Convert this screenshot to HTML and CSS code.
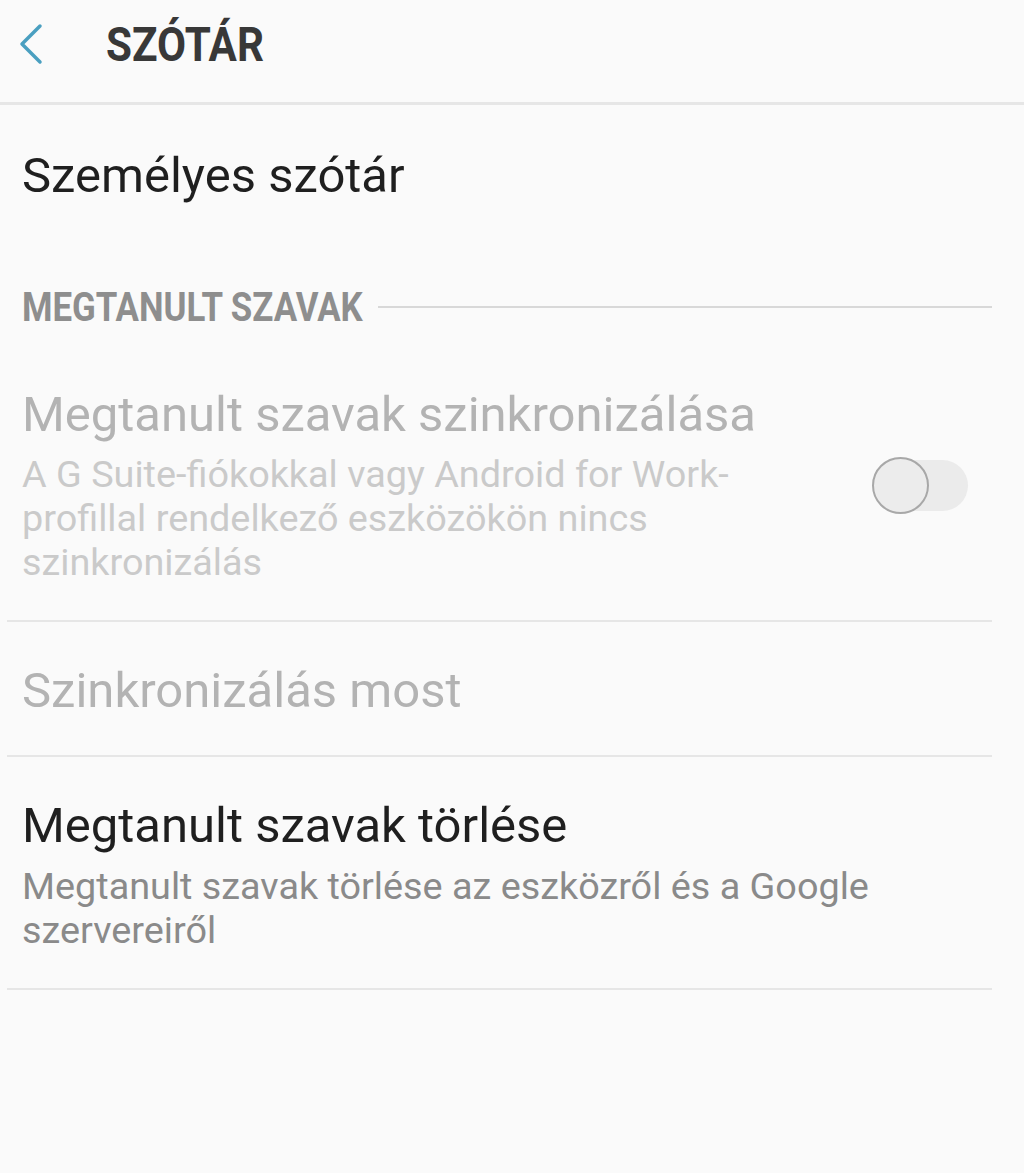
FILE: index.html
```html
<!DOCTYPE html>
<html lang="hu">
<head>
    <meta charset="UTF-8">
    <meta name="viewport" content="width=device-width, initial-scale=1.0">
    <title>Szótár</title>
    <link rel="stylesheet" href="styles.css">
</head>
<body>

    <header class="topbar">
        <svg class="back" width="30" height="44" viewBox="0 0 30 44">
            <polyline points="24,4 6,22 24,40" fill="none" stroke="#4a9fc0" stroke-width="3.5" stroke-linecap="round" stroke-linejoin="round"/>
        </svg>
        <h1 class="title">SZÓTÁR</h1>
    </header>

    <main class="list">
        <div class="item item-single">
            <div class="item-title">Személyes szótár</div>
        </div>

        <div class="section">
            <span class="section-name">MEGTANULT SZAVAK</span>
            <span class="section-line"></span>
        </div>

        <div class="item item-toggle disabled">
            <div class="item-text">
                <div class="item-title">Megtanult szavak szinkronizálása</div>
                <div class="item-sub">A G Suite-fiókokkal vagy Android for Work-profillal rendelkező eszközökön nincs szinkronizálás</div>
            </div>
            <div class="switch"><span class="knob"></span></div>
        </div>

        <div class="item disabled item-plain">
            <div class="item-title">Szinkronizálás most</div>
        </div>

        <div class="item item-plain">
            <div class="item-title">Megtanult szavak törlése</div>
            <div class="item-sub">Megtanult szavak törlése az eszközről és a Google szervereiről</div>
        </div>
    </main>

</body>
</html>
```

FILE: styles.css
```css
body {
    margin: 0;
    background-color: #fafafa;
    font-family: Roboto, 'Noto Sans', sans-serif;
    color: #1f1f1f;
}
.topbar {
    display: flex;
    align-items: center;
    height: 102px;
    border-bottom: 3px solid #e6e6e6;
    padding-left: 16px;
}
.back {
    margin-top: -14px;
}
.title {
    margin: -14px 0 0 60px;
    font-size: 49px;
    font-weight: bold;
    color: #383838;
    transform: scaleX(0.86);
    transform-origin: left center;
}
.list {
    padding: 0 32px 0 7px;
}
.item {
    padding-left: 15px;
    border-bottom: 2px solid #e6e6e6;
}
.item-single {
    border-bottom: none;
    height: 142px;
    display: flex;
    align-items: center;
}
.item-title {
    font-size: 49px;
    line-height: 56px;
}
.item-sub {
    font-size: 37.8px;
    line-height: 44px;
    color: #8a8a8a;
    margin-top: 10px;
    max-width: 880px;
}
.section {
    display: flex;
    align-items: center;
    padding-left: 15px;
    height: 120px;
}
.section-name {
    font-size: 40.5px;
    font-weight: bold;
    color: #8e8e8e;
    transform: scaleX(0.86);
    transform-origin: left center;
    white-space: nowrap;
    width: 340px;
    margin-right: 16px;
}
.section-line {
    flex: 1;
    height: 2px;
    background-color: #d8d8d8;
}
.item-toggle {
    display: flex;
    align-items: center;
    padding-top: 20px;
    padding-bottom: 36px;
}
.item-text {
    width: 760px;
}
.item-toggle .item-sub {
    margin-top: 9px;
}
.disabled .item-title {
    color: #b3b3b3;
}
.disabled .item-sub {
    color: #cacaca;
}
.switch {
    position: relative;
    margin-left: auto;
    margin-right: 24px;
    width: 86px;
    height: 51px;
    border-radius: 26px;
    background-color: #ebebeb;
}
.knob {
    position: absolute;
    left: -10px;
    top: -3px;
    width: 53px;
    height: 53px;
    border-radius: 50%;
    background-color: #ececec;
    border: 2px solid #a8a8a8;
}
.item-plain {
    padding-top: 41px;
    padding-bottom: 36px;
}
```
